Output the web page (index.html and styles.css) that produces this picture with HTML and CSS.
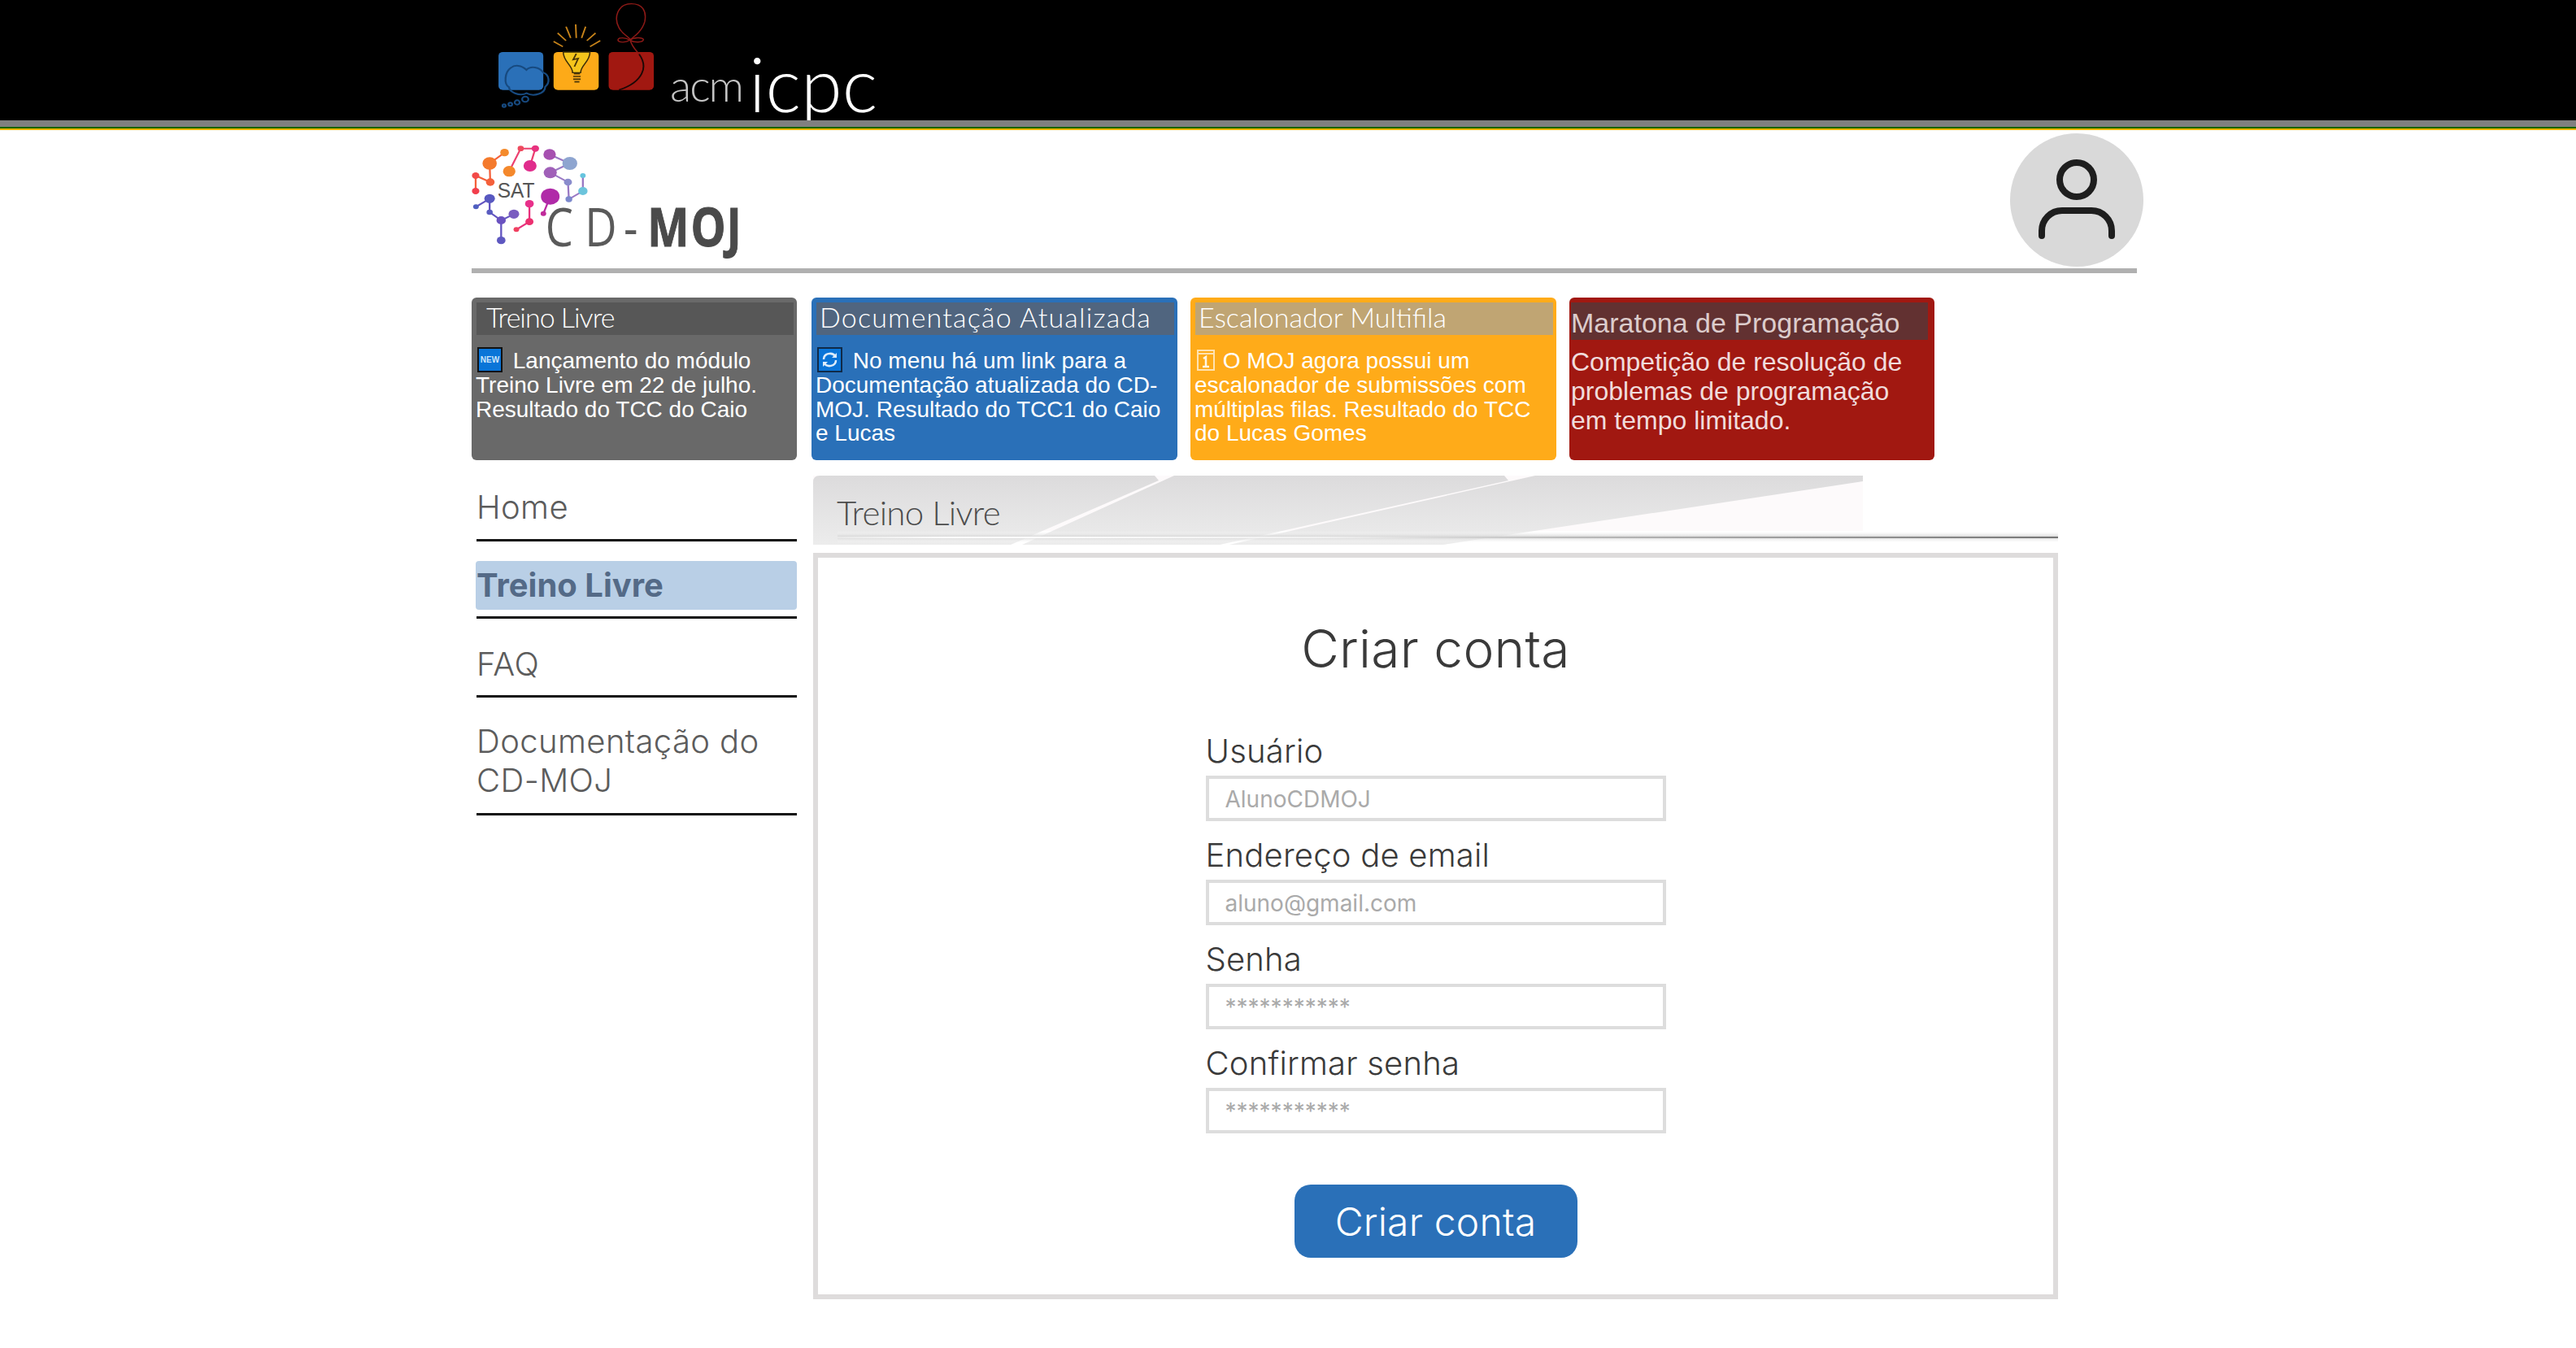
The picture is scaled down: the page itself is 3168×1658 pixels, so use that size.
FILE: index.html
```html
<!DOCTYPE html>
<html lang="pt-BR">
<head>
  <meta charset="UTF-8">
  <meta name="viewport" content="width=device-width, initial-scale=1.0">
  <title>Criar conta</title>
  <link rel="stylesheet" href="styles.css">
</head>
<body>
  <!-- ICPC banner -->
  <header class="top-bar">
    <svg class="icpc-logo" viewBox="130 0 520 444" preserveAspectRatio="none">
      <rect x="138" y="192" width="144" height="140" rx="14" fill="#2a70b8"/>
      <g fill="none" stroke="#174a80" stroke-width="6">
        <path d="M178 250C190 238 212 240 228 258C240 242 270 246 282 268C302 276 304 306 288 320C288 345 252 358 228 344C204 358 172 338 172 322C154 310 158 266 178 250Z"/>
        <circle cx="224" cy="366" r="10"/>
        <circle cx="198" cy="378" r="8"/>
        <circle cx="176" cy="385" r="6"/>
        <circle cx="156" cy="390" r="5"/>
      </g>
      <rect x="315" y="192" width="145" height="140" rx="14" fill="#fdaa18"/>
      <path d="M346 192C346 228 376 240 376 268L402 268C402 240 432 228 432 192Z" fill="#f5c51c" stroke="#3a2c08" stroke-width="4"/>
      <path d="M388 198L378 220L394 216L382 246M380 272H400M378 282H402M378 292H402M382 302H398" fill="none" stroke="#4a3608" stroke-width="5"/>
      <g stroke="#c8841a" stroke-width="5">
        <path d="M386 90L388 140M355 98L370 140M328 122L355 150M315 153L345 172M418 98L405 140M450 122L422 150M465 150L432 172"/>
      </g>
      <rect x="492" y="192" width="145" height="140" rx="14" fill="#a11811"/>
      <g fill="none" stroke="#8e1a17" stroke-width="4">
        <path d="M565 14C520 14 508 66 525 102C535 125 555 135 562 146C580 130 600 112 608 80C615 40 600 14 565 14Z"/>
        <path d="M560 148C545 136 522 138 522 148C524 158 548 158 560 148C572 138 600 136 604 146C602 158 574 158 560 148Z"/>
        <path d="M562 150C566 170 578 184 590 200"/>
      </g>
      <path d="M590 200C606 226 608 250 598 272C584 304 552 322 525 332" fill="none" stroke="#1a0806" stroke-width="5"/>
    </svg>
    <span class="acm-text">acm</span>
    <span class="icpc-text">icpc</span>
  </header>
  <div class="top-rule"></div>

  <div class="page">
    <!-- Logo and user -->
    <div class="logo-row">
      <svg class="moj-logo" viewBox="52 480 900 510" preserveAspectRatio="none">
        <g fill="none" stroke-width="6">
          <path d="M65 705V648L112 672L110 603L158 563" stroke="#f4603a"/>
          <path d="M173 632L210 548H257L240 612" stroke="#ec4070"/>
          <path d="M303 570L368 603L305 637L362 672L365 735L410 705V648" stroke="#9a78c4"/>
          <path d="M305 725L283 788" stroke="#b82aa2"/>
          <path d="M238 752V818L196 847" stroke="#e8307c"/>
          <path d="M66 763L110 733V783L147 813L188 790M147 813V887" stroke="#6254c0"/>
        </g>
        <circle cx="65" cy="648" r="12" fill="#f24a48"/>
        <circle cx="65" cy="705" r="12" fill="#f23e4c"/>
        <circle cx="112" cy="672" r="14" fill="#f4603a"/>
        <circle cx="110" cy="603" r="23" fill="#f47a2c"/>
        <circle cx="158" cy="563" r="14" fill="#f48b2c"/>
        <circle cx="173" cy="632" r="20" fill="#f4882c"/>
        <circle cx="210" cy="548" r="10" fill="#ee4a5e"/>
        <circle cx="257" cy="548" r="12" fill="#e8327f"/>
        <circle cx="240" cy="612" r="21" fill="#e02c8c"/>
        <circle cx="303" cy="570" r="20" fill="#a650b0"/>
        <circle cx="368" cy="603" r="24" fill="#8ea5d0"/>
        <circle cx="305" cy="637" r="21" fill="#a060b8"/>
        <circle cx="362" cy="672" r="13" fill="#8a8ccc"/>
        <circle cx="365" cy="735" r="11" fill="#7c88cc"/>
        <circle cx="410" cy="705" r="15" fill="#6cc4dc"/>
        <circle cx="410" cy="648" r="9" fill="#66c4de"/>
        <circle cx="305" cy="725" r="30" fill="#b02aa8"/>
        <circle cx="283" cy="788" r="9" fill="#c02a9a"/>
        <circle cx="238" cy="752" r="14" fill="#e8308a"/>
        <circle cx="238" cy="818" r="13" fill="#ec3070"/>
        <circle cx="196" cy="847" r="9" fill="#f04060"/>
        <circle cx="110" cy="733" r="17" fill="#5858c0"/>
        <circle cx="66" cy="763" r="9" fill="#5060c0"/>
        <circle cx="110" cy="783" r="10" fill="#5a5cc0"/>
        <circle cx="147" cy="813" r="15" fill="#6a52c0"/>
        <circle cx="188" cy="790" r="17" fill="#7a5cc0"/>
        <circle cx="147" cy="887" r="14" fill="#5e58c0"/>
        <text class="sat-text" x="135" y="728" textLength="120" lengthAdjust="spacingAndGlyphs">SAT</text>
        <text class="moj-text" transform="scale(.72 1)" y="908" x="402 578 752">CD-<tspan class="moj-bold" x="858 1052 1212">MOJ</tspan></text>
      </svg>
      <div class="avatar">
        <svg viewBox="0 0 164 164" width="164" height="164">
          <circle cx="82" cy="57" r="21" fill="none" stroke="#1e1e1e" stroke-width="8"/>
          <path d="M39 126V120C39 106 50 95 64 95H100C114 95 125 106 125 120V126" fill="none" stroke="#1e1e1e" stroke-width="8" stroke-linecap="round"/>
        </svg>
      </div>
    </div>

    <!-- News cards -->
    <section class="news-row">
      <article class="news-card news-gray">
        <h3 class="news-title">Treino Livre</h3>
        <p class="news-text"><svg class="news-icon" viewBox="0 0 31 31"><rect x="1" y="1" width="29" height="29" fill="#0a75d8" stroke="#111" stroke-width="2"/><text class="new-text" x="15.5" y="19" text-anchor="middle">NEW</text></svg> Lançamento do módulo Treino Livre em 22 de julho. Resultado do TCC do Caio</p>
      </article>
      <article class="news-card news-blue">
        <h3 class="news-title">Documentação Atualizada</h3>
        <p class="news-text"><svg class="news-icon" viewBox="0 0 31 31"><rect x="1" y="1" width="29" height="29" fill="#0a75d8" stroke="#102a48" stroke-width="2"/><path d="M8 15C8 7 19 6 22 11M23 16C23 24 12 25 9 20" fill="none" stroke="#dcecfa" stroke-width="2.5"/><path d="M24 7V13H18ZM7 24V18H13Z" fill="#dcecfa"/></svg> No menu há um link para a Documentação atualizada do CD-MOJ. Resultado do TCC1 do Caio e Lucas</p>
      </article>
      <article class="news-card news-orange">
        <h3 class="news-title">Escalonador Multifila</h3>
        <p class="news-text"><svg class="news-icon icon-small" viewBox="0 0 24 31"><rect x="2" y="4" width="20" height="24" fill="none" stroke="#ffe2b0" stroke-width="2"/><path d="M2 8H22" stroke="#ffe2b0" stroke-width="2"/><path d="M9 14L12 12V24M8 24H16" fill="none" stroke="#fff6e4" stroke-width="2.5"/></svg> O MOJ agora possui um escalonador de submissões com múltiplas filas. Resultado do TCC do Lucas Gomes</p>
      </article>
      <article class="news-card news-red">
        <h3 class="news-title-plain">Maratona de Programação</h3>
        <p class="news-text-plain">Competição de resolução de problemas de programação em tempo limitado.</p>
      </article>
    </section>

    <div class="main-row">
      <!-- Side menu -->
      <nav class="side-menu">
        <ul>
          <li><a href="#">Home</a></li>
          <li class="active"><a href="#">Treino Livre</a></li>
          <li class="faq"><a href="#">FAQ</a></li>
          <li><a href="#">Documentação do CD-MOJ</a></li>
        </ul>
      </nav>

      <main class="content">
        <div class="section-title">
          <svg class="section-bg" viewBox="0 0 1531 85" width="1531" height="85">
            <defs>
              <linearGradient id="fade" x1="0" y1="0" x2="0" y2="1">
                <stop offset="0" stop-color="#dcdbdc"/>
                <stop offset="1" stop-color="#ececec"/>
              </linearGradient>
              <linearGradient id="rule" x1="0" y1="0" x2="1" y2="0">
                <stop offset="0" stop-color="#e8e8e8"/>
                <stop offset=".1" stop-color="#ffffff"/>
                <stop offset=".4" stop-color="#f0f0f0"/>
                <stop offset=".6" stop-color="#bbbbbb"/>
                <stop offset="1" stop-color="#777777"/>
              </linearGradient>
              <linearGradient id="band" x1="0" y1="0" x2="0" y2="1">
                <stop offset="0" stop-color="#fff" stop-opacity="0"/>
                <stop offset=".5" stop-color="#d4d4d4"/>
                <stop offset="1" stop-color="#fff" stop-opacity="0"/>
              </linearGradient>
            </defs>
            <rect width="1291" height="68" fill="#fdfafb"/>
            <path d="M0 8Q0 0 8 0H420L425 6L243 85H0Z" fill="url(#fade)"/>
            <path d="M444 0H850L855 6L500 85H257Z" fill="url(#fade)"/>
            <path d="M888 0H1291V7L775 85H512Z" fill="url(#fade)"/>
            <rect x="30" y="68" width="1501" height="15" fill="url(#band)"/>
            <rect x="30" y="75" width="1501" height="2" fill="url(#rule)"/>
          </svg>
          <h2>Treino Livre</h2>
        </div>

        <div class="form-panel">
          <h1>Criar conta</h1>
          <form class="signup-form">
            <label for="usuario">Usuário</label>
            <input type="text" id="usuario" placeholder="AlunoCDMOJ">
            <label for="email">Endereço de email</label>
            <input type="text" id="email" placeholder="aluno@gmail.com">
            <label for="senha">Senha</label>
            <input type="text" id="senha" placeholder="***********">
            <label for="confirmar">Confirmar senha</label>
            <input type="text" id="confirmar" placeholder="***********">
            <button type="submit" class="submit-btn">Criar conta</button>
          </form>
        </div>
      </main>
    </div>
  </div>
</body>
</html>
```

FILE: styles.css
```css
/* Reset */
* {
  box-sizing: border-box;
  margin: 0;
  padding: 0;
}

body {
  font-family: Inter, "Liberation Sans", sans-serif;
  background-color: white;
}

/* Banner */
.top-bar {
  height: 156px;
  background-color: black;
  border-bottom: 8px solid #808080;
  padding-left: 610px;
  display: flex;
  align-items: flex-start;
  overflow: hidden;
}

.icpc-logo {
  width: 199px;
  height: 148px;
  flex-shrink: 0;
}

.acm-text {
  font-family: Lato, sans-serif;
  font-weight: 300;
  font-size: 54px;
  line-height: 64px;
  letter-spacing: -2px;
  color: #c4c4c4;
  margin: 73px 0 0 15px;
}

.icpc-text {
  font-family: Lato, sans-serif;
  font-weight: 300;
  font-size: 92px;
  line-height: 110px;
  color: white;
  margin: 48px 0 0 8px;
}

.top-rule {
  height: 4px;
  background: linear-gradient(#006400 50%, #ffb400 50%);
}

/* Page column */
.page {
  margin-left: 580px;
  width: 2048px;
}

.logo-row {
  height: 176px;
  border-bottom: 6px solid #b0b0b0;
  display: flex;
  justify-content: space-between;
  align-items: flex-start;
}

.moj-logo {
  width: 344px;
  height: 170px;
}

.sat-text {
  font-family: "Liberation Sans", sans-serif;
  font-size: 75px;
  fill: #555;
}

.moj-text {
  font-family: "Open Sans", sans-serif;
  font-size: 197px;
  fill: #5a5a5a;
}

.moj-bold {
  font-weight: 700;
  fill: #4a4a4a;
  stroke: #4a4a4a;
  stroke-width: 3px;
}

.avatar {
  width: 164px;
  height: 164px;
  border-radius: 50%;
  background-color: #d9d9d9;
  margin: 4px -8px 0 0;
}

/* News cards */
.news-row {
  display: flex;
  gap: 16px;
  margin-top: 30px;
  height: 200px;
}

.news-card {
  width: 450px;
  border-radius: 6px;
  padding: 6px 4px 0 6px;
  color: white;
}

.news-gray {
  width: 400px;
  margin-right: 2px;
  background-color: #696969;
}

.news-blue {
  background-color: #2a70b8;
}

.news-orange {
  background-color: #ffab19;
}

.news-red {
  width: 449px;
  background-color: #a11811;
  padding: 6px 8px 0 2px;
  color: #f0dcdc;
}

.news-title {
  height: 40px;
  font-family: Lato, sans-serif;
  font-weight: 300;
  font-size: 34px;
  line-height: 36px;
  padding-left: 4px;
  white-space: nowrap;
}

.news-gray .news-title {
  background-color: #575757;
  padding-left: 12px;
  letter-spacing: -1px;
}

.news-blue .news-title {
  background-color: #50657f;
  letter-spacing: 1.2px;
}

.news-orange .news-title {
  background-color: #c0a573;
}

.news-text {
  font-family: "Liberation Sans", sans-serif;
  font-size: 28px;
  line-height: 29.8px;
  margin: 15px 0 0 -1px;
}

.news-icon {
  width: 31px;
  height: 31px;
  vertical-align: -5px;
  margin: 0 5px 0 2px;
}

.icon-small {
  width: 24px;
  margin-right: 1px;
}

.new-text {
  font-family: "Liberation Sans", sans-serif;
  font-size: 10px;
  font-weight: 700;
  fill: #cfe6fa;
}

.news-title-plain {
  font-family: "Liberation Sans", sans-serif;
  font-weight: normal;
  font-size: 34px;
  line-height: 50px;
  height: 46px;
  background-color: #623131;
  color: #dccccc;
  white-space: nowrap;
}

.news-text-plain {
  font-family: "Liberation Sans", sans-serif;
  font-size: 32px;
  line-height: 36px;
  margin-top: 9px;
}

/* Main area */
.main-row {
  display: flex;
  margin-top: 19px;
}

.side-menu {
  width: 394px;
  margin: 1px 20px 0 6px;
  flex-shrink: 0;
}

.side-menu ul {
  list-style: none;
}

.side-menu li {
  padding: 30px 0 16px;
  border-bottom: 3px solid #111;
  font-size: 40px;
  font-weight: 350;
  line-height: 48px;
  letter-spacing: 0.4px;
}

.side-menu li:first-child {
  padding: 14px 0 15px;
}

.side-menu a {
  color: #5c5c5c;
  text-decoration: none;
  display: block;
}

.side-menu .active {
  padding: 24px 0 8px;
  letter-spacing: 0;
}

.side-menu .faq {
  padding: 32px 0 14px;
}

.side-menu .active a {
  line-height: 60px;
  font-weight: 700;
  color: #546a87;
  background-color: #b9cfe6;
  border-radius: 4px;
  margin-left: -1px;
  padding-left: 1px;
}

.content {
  width: 1531px;
}

/* Title strip */
.section-title {
  position: relative;
  height: 85px;
}

.section-bg {
  position: absolute;
  left: 0;
  top: 0;
}

.section-title h2 {
  position: relative;
  font-family: Lato, sans-serif;
  font-weight: 300;
  font-size: 42px;
  line-height: 50px;
  letter-spacing: -0.7px;
  color: #4c4c4c;
  padding: 20px 0 0 29px;
}

/* Form panel */
.form-panel {
  margin-top: 10px;
  border: 6px solid #dedcdc;
  padding: 73px 0 45px;
}

.form-panel h1 {
  font-size: 64px;
  font-weight: 350;
  line-height: 77px;
  letter-spacing: 0.3px;
  text-align: center;
  color: #3a3a3a;
}

.signup-form {
  width: 566px;
  margin: 63px auto 0;
  display: flex;
  flex-direction: column;
}

.signup-form label {
  font-size: 40px;
  font-weight: 350;
  line-height: 50px;
  letter-spacing: 0.2px;
  color: #3a3a3a;
  margin-bottom: 5px;
}

.signup-form input {
  height: 56px;
  border: 4px solid #dddddd;
  padding: 2px 20px 0;
  font-family: Inter, sans-serif;
  font-size: 28px;
  margin-bottom: 17px;
}

.signup-form input::placeholder {
  color: #aaaaaa;
  opacity: 1;
}

.submit-btn {
  width: 348px;
  height: 90px;
  margin: 46px auto 0;
  background-color: #2a70b8;
  color: white;
  font-family: Inter, sans-serif;
  font-size: 48px;
  font-weight: 350;
  letter-spacing: 0.2px;
  border: none;
  border-radius: 20px;
}
```
